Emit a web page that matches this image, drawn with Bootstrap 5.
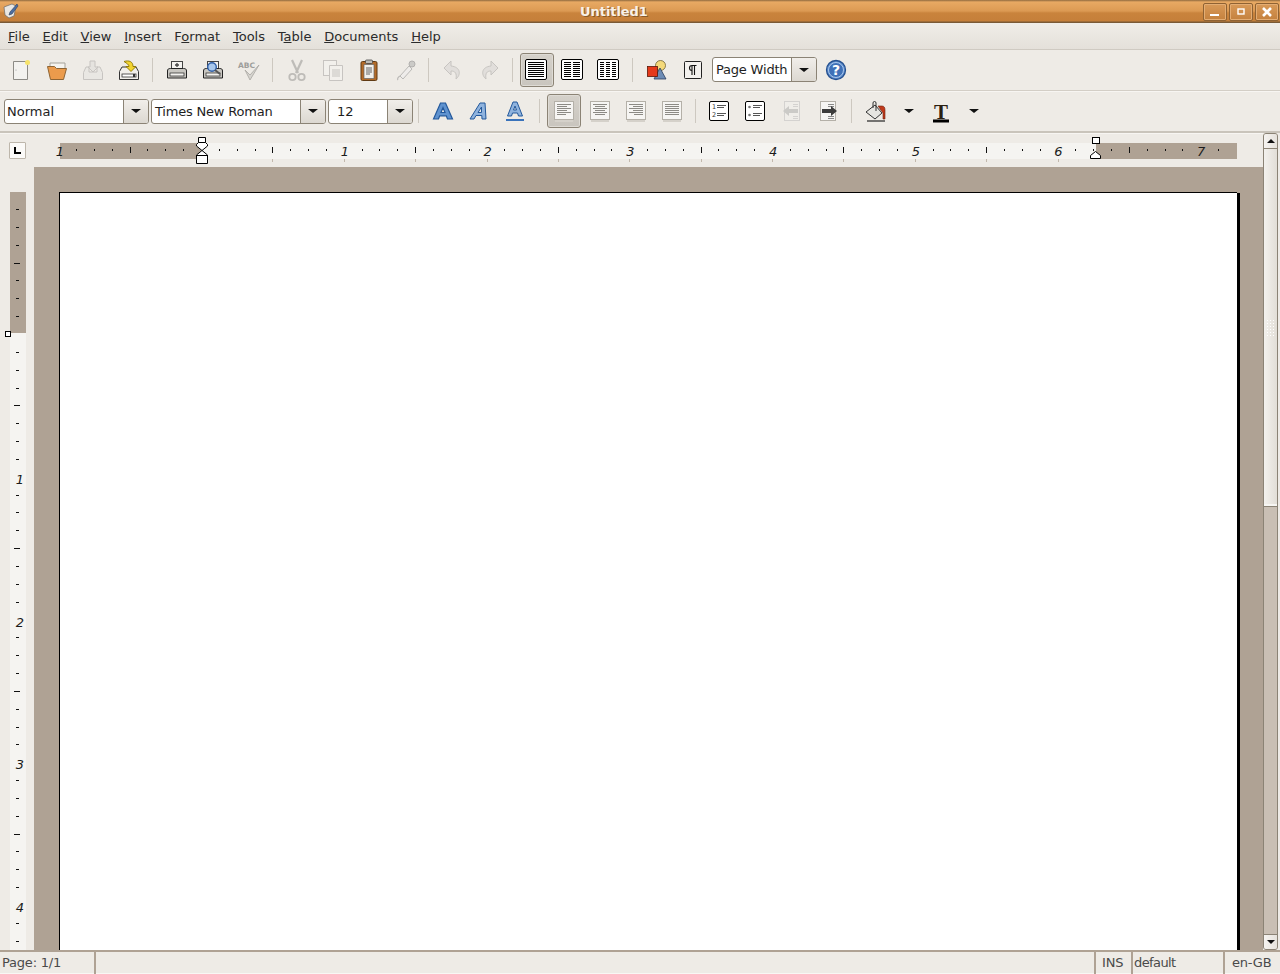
<!DOCTYPE html>
<html lang="en">
<head>
  <meta charset="UTF-8" />
  <meta name="viewport" content="width=device-width, initial-scale=1.0" />
  <title>Untitled1</title>
  <link href="https://cdn.jsdelivr.net/npm/bootstrap@5.3.0/dist/css/bootstrap.min.css" rel="stylesheet">
  <style>
    html, body { height: 100%; }
    body {
      background: #eeebe6;
      font-family: "DejaVu Sans", sans-serif;
      font-size: 13px;
      color: #2b2b2b;
      overflow: hidden;
    }
    .app { height: 100vh; }

    .titlebar {
      height: 23px;
      background: linear-gradient(to bottom, #8f6a3e 0, #e8a963 2px, #dc9a53 11px, #c9833c 13px, #c57f3a 21px, #7a5a36 22px);
      position: relative;
    }
    .title-text { color: #f7f1e8; font-weight: 700; text-shadow: 1px 1px 0 #8a5a2a; margin-left: 580px; line-height: 24px; letter-spacing: -.05px; }
    .app-icon { position: absolute; left: 3px; top: 3px; }
    .win-btn {
      width: 24px; height: 18px; margin-left: 2px;
      border: 1px solid #8f6233; border-radius: 2px;
      box-shadow: inset 0 0 0 1px #e4ad73;
      background: linear-gradient(to bottom, #d99a58, #c4813e);
    }
    .win-btns { position: absolute; right: 1px; top: 3px; }

    .menubar {
      height: 27px; padding: 1px 0 0 8px; gap: 12.8px;
      background: linear-gradient(to bottom, #f0ede8, #e4e0da);
      border-bottom: 1px solid #cfcac2;
      line-height: 26px;
    }
    .toolbar { border-bottom: 1px solid #d3cec6; box-shadow: 0 1px 0 #f7f5f2; }
    .toolbar-1 { height: 41px; padding-left: 3px; padding-bottom: 1px; }
    .toolbar-2 { height: 42px; padding-left: 4px; border-bottom: 2px solid #c9c4bb; }

    .tb-btn {
      width: 36px; height: 34px; padding: 0;
      flex: none;
      border: 1px solid transparent; border-radius: 3px;
      background: none;
    }
    .tb-btn.active {
      background: linear-gradient(to bottom, #d5d1ca, #c9c5be);
      border-color: #8b8375;
      box-shadow: inset 0 0 0 1px #dedbd5;
      background-clip: padding-box;
      width: 34px; margin: 0 1px;
    }
    .tb-btn.narrow { width: 20px; }
    .gap-5px { margin-left: 5px; }
    .gap-4px { margin-left: 4px; }
    .gap-1px { margin-left: 1px; }
    .help-btn { margin-left: -1px; }
    .tb-sep { width: 12px; height: 24px; flex: none; position: relative; }
    .tb-sep::after { content: ""; position: absolute; left: 5px; top: 0; bottom: 0; width: 1px; background: #cdc8c0; }

    .combo {
      height: 25px; flex: none; margin-right: 2px;
      border: 1px solid #8b8375; border-radius: 3px;
      background: #fff;
      overflow: hidden;
    }
    .combo .value { flex: 1 1 auto; padding-left: 2px; line-height: 23px; color: #1e1e1e; white-space: nowrap; }
    .combo .arrow {
      width: 25px; flex: none;
      border-left: 1px solid #8b8375;
      background: linear-gradient(to bottom, #f1eeea, #dcd8d1);
    }
    .down-caret {
      width: 0; height: 0;
      border-left: 5px solid transparent; border-right: 5px solid transparent; border-top: 4px solid #111;
    }
    .combo-style { width: 145px; }
    .combo-font { width: 175px; }
    .combo-font .value { padding-left: 3px; letter-spacing: -.2px; }
    .combo-size { width: 85px; margin-right: 0; }
    .combo-size .value { padding-left: 8px; }
    .combo-zoom { width: 105px; }
    .combo-zoom .value { padding-left: 3px; letter-spacing: -.2px; }

    .ruler-row { height: 34px; flex: none; }
    .corner { width: 34px; flex: none; position: relative; }
    .corner-btn {
      position: absolute; left: 9px; top: 9px;
      width: 17px; height: 17px;
      background: #fbfaf8; border: 1px solid #bdb6ab;
      border-radius: 1px;
    }
    .hruler, .vruler { display: block; flex: none; }
    .vruler-col { width: 34px; flex: none; overflow: hidden; }
    .canvas {
      background: #afa294;
      padding: 25px 0 0 25px;
      overflow: hidden;
      min-height: 0;
    }
    .page {
      width: 1178px; height: 1400px;
      background: #fff;
      border: solid #000;
      border-width: 1px 0 0 1px;
      box-shadow: 3px 1px 0 #000;
    }
    .scrollbar {
      width: 17px; flex: none;
      background: #eeebe6;
      padding-right: 2px;
    }
    .sb-inner {
      border: 1px solid #8b8375; border-radius: 3px;
      background: #c9bfb4;
      height: 100%;
      overflow: hidden;
    }
    .sb-btn { height: 15px; flex: none; background: linear-gradient(to right, #f6f4f1, #e6e2dc); }
    .sb-btn-up { border-bottom: 1px solid #8b8375; }
    .sb-btn-down { border-top: 1px solid #8b8375; }
    .up-caret {
      width: 0; height: 0;
      border-left: 4px solid transparent; border-right: 4px solid transparent; border-bottom: 4px solid #111;
    }
    .small-caret { border-left-width: 4px; border-right-width: 4px; }
    .sb-thumb {
      height: 358px; flex: none;
      background: linear-gradient(to right, #f3f1ed, #e2ded7);
      border-bottom: 1px solid #8b8375;
      box-shadow: inset 0 -2px 0 #f7f6f3;
    }
    .sb-grip {
      width: 9px; height: 17px;
      background-image: radial-gradient(circle, #fff 1px, transparent 1px);
      background-size: 3px 3px;
    }

    .statusbar {
      height: 24px; flex: none;
      background: #afa294;
      padding-top: 2px;
      color: #4a4a4a;
      line-height: 21px;
    }
    .status-cell { background: #eeebe6; height: 22px; margin-right: 2px; white-space: nowrap; padding-left: 2px; border-bottom: 1px solid #f8f7f4; letter-spacing: -.2px; }
    .cell-page { width: 94px; }
    .cell-fill { flex: 1 1 auto; }
    .cell-ins { width: 35px; padding-left: 6px; }
    .cell-mode { width: 90px; padding-left: 1px; letter-spacing: -.6px; }
    .cell-lang { width: 55px; margin-right: 0; padding-left: 7px; }
  </style>
</head>
<body>
  <svg width="0" height="0" class="position-absolute">
    <defs>
      <symbol id="i-cols1" viewBox="0 0 24 24"><rect x=".5" y="1.500" width="21" height="20" rx="1.500" fill="#fff" stroke="#000"/><path d="M3 4.500h16M3 6.500h16M3 8.500h16M3 10.500h16M3 12.500h16M3 14.500h16M3 16.500h16M3 18.500h16" stroke="#000"/></symbol>
      <symbol id="i-cols2" viewBox="0 0 24 24"><rect x=".5" y="1.500" width="21" height="20" rx="1.500" fill="#fff" stroke="#000"/><path d="M3 4.500h7M3 6.500h7M3 8.500h7M3 10.500h7M3 12.500h7M3 14.500h7M3 16.500h7M3 18.500h7M12 4.500h7M12 6.500h7M12 8.500h7M12 10.500h7M12 12.500h7M12 14.500h7M12 16.500h7M12 18.500h7" stroke="#000"/></symbol>
      <symbol id="i-cols3" viewBox="0 0 24 24"><rect x=".5" y="1.500" width="21" height="20" rx="1.500" fill="#fff" stroke="#000"/><path d="M3 4.500h4M3 6.500h4M3 8.500h4M3 10.500h4M3 12.500h4M3 14.500h4M3 16.500h4M3 18.500h4M9 4.500h4M9 6.500h4M9 8.500h4M9 10.500h4M9 12.500h4M9 14.500h4M9 16.500h4M9 18.500h4M15 4.500h4M15 6.500h4M15 8.500h4M15 10.500h4M15 12.500h4M15 14.500h4M15 16.500h4M15 18.500h4" stroke="#000"/></symbol>
      <symbol id="i-a" viewBox="0 0 24 24"><path d="M2.500 20 9.500 4h5l7 16h-5l-1.200-3.200H8.700L7.500 20z M10 13.500h4L12 8.500z" fill="#5f92cf" fill-rule="evenodd" stroke="#23589b" stroke-width="1.200"/></symbol>
      <symbol id="i-sheet" viewBox="0 0 24 24"><rect x="2.500" y="2.500" width="19" height="18" fill="#f6f5f3" stroke="#b4b0a8"/><rect x="3" y="21" width="18" height="2" fill="#d5d1ca"/></symbol>
    </defs>
  </svg>

  <div class="app d-flex flex-column">
    <div class="titlebar flex-shrink-0">
      <svg class="app-icon" width="16" height="16" viewBox="0 0 16 16"><path d="M1 4 9 1l4 2-2 10-5 2-4-3z" fill="#e9e7e2" stroke="#6a6a6a" stroke-width=".7"/><path d="M14 1 7 9l-1 3 3-1 6-8z" fill="#4c6ea0" stroke="#2c3e5c" stroke-width=".6"/></svg>
      <div class="title-text">Untitled1</div>
      <div class="win-btns d-flex">
        <div class="win-btn d-flex align-items-center justify-content-center"><svg width="12" height="12" viewBox="0 0 12 12"><rect x="1" y="8" width="9" height="2" fill="#fff"/></svg></div>
        <div class="win-btn d-flex align-items-center justify-content-center"><svg width="12" height="12" viewBox="0 0 12 12"><rect x="3" y="3" width="6" height="5" fill="none" stroke="#fff" stroke-width="1.400"/></svg></div>
        <div class="win-btn d-flex align-items-center justify-content-center"><svg width="12" height="12" viewBox="0 0 12 12"><path d="M2 2l8 8M10 2l-8 8" stroke="#fff" stroke-width="2.600"/></svg></div>
      </div>
    </div>

    <div class="menubar d-flex flex-shrink-0">
      <span><u>F</u>ile</span><span><u>E</u>dit</span><span><u>V</u>iew</span><span><u>I</u>nsert</span><span>F<u>o</u>rmat</span><span><u>T</u>ools</span><span>T<u>a</u>ble</span><span><u>D</u>ocuments</span><span><u>H</u>elp</span>
    </div>

    <div class="toolbar toolbar-1 d-flex align-items-center flex-shrink-0">
      <button class="tb-btn"><svg width="24" height="24" viewBox="0 0 24 24"><path d="M4.500 3.500h14v18h-14z" fill="#f3f2ef" stroke="#8c8a85"/><circle cx="18.500" cy="4.500" r="2.500" fill="#f6e36a"/><circle cx="7" cy="12" r=".6" fill="#999"/></svg></button>
      <button class="tb-btn"><svg width="24" height="24" viewBox="0 0 24 24"><path d="M5 5h15v8H5z" fill="#f4f3ef" stroke="#a5a29a"/><path d="M2.500 8.500h7l2 2h10l-3 11h-13z" fill="#eb9b4c" stroke="#8d6434"/></svg></button>
      <button class="tb-btn opacity-25"><svg width="24" height="24" viewBox="0 0 24 24"><path d="M2.500 14.500 5 9h3v5h8V9h3l2.500 5.500v7h-19z" fill="#ddd" stroke="#555"/><path d="M9 3h5v6h3l-5 5-5-5h2z" fill="#ccc" stroke="#555"/></svg></button>
      <button class="tb-btn"><svg width="24" height="24" viewBox="0 0 24 24"><path d="M2.500 13.500 5 9h14l2.500 4.500v8h-19z" fill="#f1efeb" stroke="#333"/><rect x="5" y="16" width="14" height="3" fill="#fff" stroke="#333" stroke-width=".8"/><rect x="16" y="16" width="2" height="3" fill="#333"/><path d="M7 3.500c5-1.500 9 0 9 5h3l-5 5-5-5h3c0-2-2-3-5-5z" fill="#f2d430" stroke="#8b7400" stroke-width=".9"/></svg></button>
      <div class="tb-sep"></div>
      <button class="tb-btn"><svg width="24" height="24" viewBox="0 0 24 24"><rect x="6.500" y="3.500" width="11" height="8" fill="#f4f3f0" stroke="#444"/><path d="M12 5v4M10 7h4" stroke="#444" stroke-width="1.300"/><path d="M2.500 13c0-2 1-2.500 3-2.500h13c2 0 3 .5 3 2.500v7h-19z" fill="#c9c7c2" stroke="#222"/><rect x="5" y="15" width="14" height="3" fill="#f4f3f0" stroke="#222" stroke-width=".7"/></svg></button>
      <button class="tb-btn"><svg width="24" height="24" viewBox="0 0 24 24"><rect x="6.500" y="3.500" width="11" height="8" fill="#f4f3f0" stroke="#444"/><path d="M2.500 13c0-2 1-2.500 3-2.500h13c2 0 3 .5 3 2.500v7h-19z" fill="#c9c7c2" stroke="#222"/><rect x="5" y="15" width="14" height="3" fill="#f4f3f0" stroke="#222" stroke-width=".7"/><circle cx="11" cy="9" r="4.300" fill="#a9c8ec" stroke="#2f5fa8" stroke-width="1.400"/><path d="M14 12l5 4" stroke="#555" stroke-width="2"/></svg></button>
      <button class="tb-btn"><svg width="24" height="24" viewBox="0 0 24 24"><text x="1" y="10" font-family="DejaVu Sans" font-weight="700" font-size="7.500" fill="#9d9d9a">ABC</text><path d="M8 12l5 10 9-15-9 10z" fill="#d6d4cf" stroke="#a8a6a1" stroke-width=".8"/></svg></button>
      <div class="tb-sep"></div>
      <button class="tb-btn opacity-25"><svg width="24" height="24" viewBox="0 0 24 24"><path d="M7 2l6 13M17 2 11 15" stroke="#333" stroke-width="2.200"/><circle cx="7.500" cy="19" r="3.200" fill="none" stroke="#333" stroke-width="1.800"/><circle cx="16.500" cy="19" r="3.200" fill="none" stroke="#333" stroke-width="1.800"/></svg></button>
      <button class="tb-btn opacity-25"><svg width="24" height="24" viewBox="0 0 24 24"><rect x="2.500" y="2.500" width="13" height="15" fill="#fff" stroke="#555"/><path d="M8.500 7.500h13v15h-13z" fill="#fff" stroke="#555"/><path d="M11 12h8M11 14h8M11 16h8M11 18h8" stroke="#555"/></svg></button>
      <button class="tb-btn"><svg width="24" height="24" viewBox="0 0 24 24"><rect x="4" y="3.500" width="16" height="19" rx="1.500" fill="#b36b28" stroke="#5f3a14"/><path d="M7 6.500h10v14H7z" fill="#f1f0ec" stroke="#666" stroke-width=".7"/><rect x="8.500" y="2" width="7" height="3.500" rx="1" fill="#bdbbb5" stroke="#444" stroke-width=".8"/><path d="M9 10h6M9 12h6M9 14h6M9 16h4" stroke="#666"/></svg></button>
      <button class="tb-btn opacity-50"><svg width="24" height="24" viewBox="0 0 24 24"><path d="M7 18 16 8l3 3-9 10z" fill="#eee" stroke="#888"/><circle cx="19" cy="6" r="3" fill="#aaa" stroke="#777"/><path d="M7 18c-2 1-3 3-2 4" fill="none" stroke="#888" stroke-width="1.200"/></svg></button>
      <div class="tb-sep"></div>
      <button class="tb-btn opacity-25"><svg width="24" height="24" viewBox="0 0 24 24"><path d="M10 3 3 10l7 7v-4c4 0 6 2 5 8 5-4 5-12-5-13z" fill="#bbb" stroke="#555"/></svg></button>
      <button class="tb-btn opacity-25"><svg width="24" height="24" viewBox="0 0 24 24"><path d="M14 3l7 7-7 7v-4c-4 0-6 2-5 8-5-4-5-12 5-13z" fill="#bbb" stroke="#555"/></svg></button>
      <div class="tb-sep"></div>
      <button class="tb-btn active"><svg width="24" height="24"><use href="#i-cols1"/></svg></button>
      <button class="tb-btn"><svg width="24" height="24"><use href="#i-cols2"/></svg></button>
      <button class="tb-btn"><svg width="24" height="24"><use href="#i-cols3"/></svg></button>
      <div class="tb-sep"></div>
      <button class="tb-btn"><svg width="24" height="24" viewBox="0 0 24 24"><circle cx="15.500" cy="7.500" r="5" fill="#f4d97a" stroke="#6f6134" stroke-width=".8"/><path d="M15 10l6 11H9z" fill="#6d8cb5" stroke="#2b3d5c" stroke-width=".8"/><rect x="2.500" y="8.500" width="10" height="10" fill="#e5391a" stroke="#5b1708" stroke-width=".8"/></svg></button>
      <button class="tb-btn"><svg width="24" height="24" viewBox="0 0 24 24"><rect x="3.500" y="3.500" width="17" height="17" rx="1" fill="#f3f1ee" stroke="#222"/><path d="M13.500 17V7.500M11 17V7.500H15.500M11 7.500a2.500 2.500 0 0 0 0 5" fill="none" stroke="#111" stroke-width="1.100"/></svg></button>
      <div class="combo combo-zoom d-flex gap-1px">
        <div class="value">Page Width</div>
        <div class="arrow d-flex align-items-center justify-content-center"><div class="down-caret"></div></div>
      </div>
      <button class="tb-btn help-btn"><svg width="22" height="22" viewBox="0 0 22 22"><circle cx="11" cy="11" r="9.500" fill="#5f8fd0" stroke="#25508f" stroke-width="1.300"/><circle cx="11" cy="11" r="7.500" fill="#3f71b8" stroke="#a9c6ea"/><text x="11" y="16" text-anchor="middle" font-family="DejaVu Sans" font-weight="700" font-size="14" fill="#fff">?</text></svg></button>
    </div>

    <div class="toolbar toolbar-2 d-flex align-items-center flex-shrink-0">
      <div class="combo combo-style d-flex"><div class="value">Normal</div><div class="arrow d-flex align-items-center justify-content-center"><div class="down-caret"></div></div></div>
      <div class="combo combo-font d-flex"><div class="value">Times New Roman</div><div class="arrow d-flex align-items-center justify-content-center"><div class="down-caret"></div></div></div>
      <div class="combo combo-size d-flex"><div class="value">12</div><div class="arrow d-flex align-items-center justify-content-center"><div class="down-caret"></div></div></div>
      <div class="tb-sep"></div>
      <button class="tb-btn"><svg width="24" height="24"><use href="#i-a"/></svg></button>
      <button class="tb-btn"><svg width="24" height="24" viewBox="0 0 24 24"><path d="M3 20 13 4h5l1 16h-4l-.2-3.500H9L7 20z M11 13.500h3.500L14.500 8z" fill="#8fb3de" fill-rule="evenodd" stroke="#23589b"/></svg></button>
      <button class="tb-btn"><svg width="24" height="24" viewBox="0 0 24 24"><path d="M4.500 17 10 3h4l5.500 14h-4l-1-3h-5l-1 3z M10.500 11h3L12 7z" fill="#8fb3de" fill-rule="evenodd" stroke="#23589b"/><rect x="3" y="20" width="18" height="2" fill="#3a73bb"/></svg></button>
      <div class="tb-sep gap-1px"></div>
      <button class="tb-btn active"><svg width="24" height="24" viewBox="0 0 24 24"><use href="#i-sheet"/><path d="M5 5.500h14M5 7.500h10M5 9.500h14M5 11.500h10M5 13.500h14M5 15.500h9" stroke="#8c8a85"/></svg></button>
      <button class="tb-btn"><svg width="24" height="24" viewBox="0 0 24 24"><use href="#i-sheet"/><path d="M5 5.500h14M7 7.500h10M5 9.500h14M7 11.500h10M5 13.500h14M7 15.500h10" stroke="#8c8a85"/></svg></button>
      <button class="tb-btn"><svg width="24" height="24" viewBox="0 0 24 24"><use href="#i-sheet"/><path d="M5 5.500h14M9 7.500h10M5 9.500h14M9 11.500h10M5 13.500h14M10 15.500h9" stroke="#8c8a85"/></svg></button>
      <button class="tb-btn"><svg width="24" height="24" viewBox="0 0 24 24"><use href="#i-sheet"/><path d="M5 5.500h14M5 7.500h14M5 9.500h14M5 11.500h14M5 13.500h14M5 15.500h14" stroke="#8c8a85"/></svg></button>
      <div class="tb-sep"></div>
      <button class="tb-btn"><svg width="24" height="24" viewBox="0 0 24 24"><rect x="1.500" y="2.500" width="19" height="19" rx="1.500" fill="#fff" stroke="#000"/><text x="4" y="10" font-family="DejaVu Sans" font-size="6.500" fill="#333">1</text><text x="4" y="18" font-family="DejaVu Sans" font-size="6.500" fill="#333">2</text><path d="M9 6.500h9M9 8.500h7M9 14.500h9M9 16.500h7" stroke="#555"/></svg></button>
      <button class="tb-btn"><svg width="24" height="24" viewBox="0 0 24 24"><rect x="1.500" y="2.500" width="19" height="19" rx="1.500" fill="#fff" stroke="#000"/><circle cx="5.500" cy="8" r="1.300" fill="#777"/><circle cx="5.500" cy="16" r="1.300" fill="#777"/><path d="M9 6.500h9M9 8.500h7M9 14.500h9M9 16.500h7" stroke="#555"/></svg></button>
      <button class="tb-btn opacity-50"><svg width="24" height="24" viewBox="0 0 24 24"><rect x="4.500" y="2.500" width="15" height="19" fill="#f1efec" stroke="#bbb"/><path d="M13 5.500h5M13 7.500h5M13 17.500h5M13 19.500h5" stroke="#bbb"/><path d="M3 12l6-5v3h9v4H9v3z" fill="#aaa"/></svg></button>
      <button class="tb-btn"><svg width="24" height="24" viewBox="0 0 24 24"><rect x="4.500" y="2.500" width="15" height="19" fill="#f6f5f3" stroke="#b4b0a8"/><path d="M12 5.500h6M12 7.500h6M12 17.500h6M12 19.500h6" stroke="#888"/><path d="M21 12l-6-5v3H6v4h9v3z" fill="#3c3c3c"/></svg></button>
      <div class="tb-sep"></div>
      <button class="tb-btn"><svg width="24" height="24" viewBox="0 0 24 24"><path d="M2 13 11 6l7 8-7 6z" fill="#e6e5e1" stroke="#333"/><path d="M9 9V4a1.500 1.500 0 0 1 3 0v8" fill="none" stroke="#333"/><path d="M14 7h4c2 0 3 1.500 3 4v9h-2v-6z" fill="#c0391b" stroke="#6d2110" stroke-width=".6"/><path d="M3 22h18" stroke="#222" stroke-width="1.200"/></svg></button>
      <div class="tb-btn narrow gap-5px d-flex align-items-center justify-content-center"><div class="down-caret"></div></div>
      <button class="tb-btn gap-4px"><svg width="24" height="24" viewBox="0 0 24 24"><text x="12" y="19.500" text-anchor="middle" font-family="Liberation Serif" font-weight="700" font-size="21" fill="#2a2012">T</text><rect x="4" y="20.500" width="16" height="3" fill="#000"/></svg></button>
      <div class="tb-btn narrow gap-5px d-flex align-items-center justify-content-center"><div class="down-caret"></div></div>
    </div>

    <div class="d-flex flex-grow-1 overflow-hidden">
      <div class="d-flex flex-column flex-grow-1 overflow-hidden">
        <div class="ruler-row d-flex">
          <div class="corner">
            <div class="corner-btn d-flex align-items-center justify-content-center"><svg width="9" height="9" viewBox="0 0 9 9"><path d="M2 1v6h6" fill="none" stroke="#000" stroke-width="2"/></svg></div>
          </div>
          <svg id="hruler" class="hruler" width="1229" height="34"></svg>
        </div>
        <div class="d-flex flex-grow-1 overflow-hidden">
          <div class="vruler-col"><svg id="vruler" class="vruler" width="34" height="783"></svg></div>
          <div class="canvas flex-grow-1"><div class="page"></div></div>
        </div>
      </div>
      <div class="scrollbar">
        <div class="sb-inner d-flex flex-column">
          <div class="sb-btn sb-btn-up d-flex align-items-center justify-content-center"><div class="up-caret"></div></div>
          <div class="sb-thumb d-flex align-items-center justify-content-center"><div class="sb-grip"></div></div>
          <div class="flex-grow-1"></div>
          <div class="sb-btn sb-btn-down d-flex align-items-center justify-content-center"><div class="down-caret small-caret"></div></div>
        </div>
      </div>
    </div>

    <div class="statusbar d-flex">
      <div class="status-cell cell-page">Page: 1/1</div>
      <div class="status-cell cell-fill"></div>
      <div class="status-cell cell-ins">INS</div>
      <div class="status-cell cell-mode">default</div>
      <div class="status-cell cell-lang">en-GB</div>
    </div>
  </div>

  <script src="https://cdn.jsdelivr.net/npm/bootstrap@5.3.0/dist/js/bootstrap.bundle.min.js"></script>
  <script>
    // rulers: 1 inch = 142.75px, ticks every 1/8
    const INCH = 142.75;
    const NS = "http://www.w3.org/2000/svg";
    const SHADE = "#afa294", LIGHT = "#f5f4f1";

    function add(svg, tag, attrs, text) {
      const el = document.createElementNS(NS, tag);
      for (const k in attrs) el.setAttribute(k, attrs[k]);
      if (text) el.textContent = text;
      svg.appendChild(el);
    }

    // horizontal ruler, svg starts at x=34, y=133
    const h = document.getElementById("hruler");
    const hx = x => x - 34, hy = y => y - 133;
    add(h, "rect", { x: hx(60), y: hy(143), width: 1177, height: 16, fill: LIGHT });
    add(h, "rect", { x: hx(60), y: hy(143), width: 141, height: 16, fill: SHADE });
    add(h, "rect", { x: hx(1096), y: hy(143), width: 141, height: 16, fill: SHADE });
    for (let i = -7; i <= 57; i++) {
      const x = Math.round(201 + i * INCH / 8);
      if (x < 62 || x > 1235) continue;
      if (i % 8 === 0) continue;
      if (i % 4 === 0) add(h, "rect", { x: hx(x), y: hy(147), width: 1, height: 6, fill: "#111" });
      else add(h, "rect", { x: hx(x), y: hy(149), width: 1, height: 2, fill: "#111" });
      if (i % 4 === 0 && x > 205 && x < 1090) add(h, "rect", { x: hx(x), y: hy(159), width: 1, height: 3, fill: "#c2b8ac" });
    }
    [[-1, "1"], [1, "1"], [2, "2"], [3, "3"], [4, "4"], [5, "5"], [6, "6"], [7, "7"]].forEach(([n, t]) => {
      const x = n < 0 ? 60 : 345 + (n - 1) * 142.7;
      add(h, "text", { x: hx(x), y: hy(156), "text-anchor": "middle", "font-family": "DejaVu Sans", "font-style": "italic", "font-size": 13, fill: "#1c1c1c" }, t);
      if (n > 0 && n < 7) add(h, "rect", { x: hx(Math.round(x) - 1), y: hy(159), width: 1, height: 3, fill: "#c2b8ac" });
    });
    // indent and margin handles
    const pts = [[198.5,137.5],[205.5,137.5],[205.5,142.5],[207.5,144.5],[207.5,146],[202,150.5],[207.5,155],[207.5,163.5],[196.5,163.5],[196.5,155],[202,150.5],[196.5,146],[196.5,144.5],[198.5,142.5]];
    add(h, "polygon", { points: pts.map(p => hx(p[0]) + "," + hy(p[1])).join(" "), fill: "#fff", stroke: "#000" });
    add(h, "path", { d: "M" + hx(198.5) + " " + hy(142.5) + "h7M" + hx(196.5) + " " + hy(155.5) + "h11", stroke: "#000" });
    add(h, "rect", { x: hx(1092.5), y: hy(137.5), width: 7, height: 6, fill: "#fff", stroke: "#000" });
    add(h, "path", { d: "M" + hx(1090.5) + " " + hy(158.5) + "v-3l5-4 5 4v3z", fill: "#fff", stroke: "#000" });

    // vertical ruler, svg starts at x=0, y=167
    const v = document.getElementById("vruler");
    const vy = y => y - 167;
    add(v, "rect", { x: 10, y: vy(192), width: 16, height: 758, fill: LIGHT });
    add(v, "rect", { x: 10, y: vy(192), width: 16, height: 141, fill: SHADE });
    for (let i = -7; i <= 34; i++) {
      const y = Math.round(334 + i * INCH / 8);
      if (i % 8 === 0) continue;
      if (i % 4 === 0) add(v, "rect", { x: 14, y: vy(y), width: 6, height: 1, fill: "#111" });
      else add(v, "rect", { x: 16, y: vy(y), width: 3, height: 1, fill: "#111" });
    }
    [1, 2, 3, 4].forEach(n => {
      add(v, "text", { x: 20, y: vy(484 + (n - 1) * 142.7), "text-anchor": "middle", "font-family": "DejaVu Sans", "font-style": "italic", "font-size": 13, fill: "#1c1c1c" }, String(n));
    });
    add(v, "rect", { x: 5.5, y: vy(331.5), width: 5, height: 5, fill: "#fff", stroke: "#000" });
  </script>
</body>
</html>
